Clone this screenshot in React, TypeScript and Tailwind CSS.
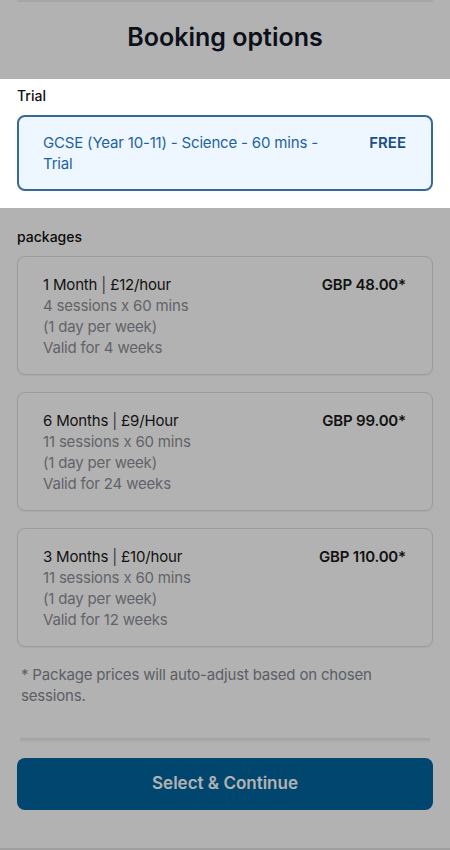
const PACKAGES = [
  { title: '1 Month', rate: '£12/hour', sessions: '4 sessions x 60 mins', days: '(1 day per week)', valid: 'Valid for 4 weeks', price: 'GBP 48.00*' },
  { title: '6 Months', rate: '£9/Hour', sessions: '11 sessions x 60 mins', days: '(1 day per week)', valid: 'Valid for 24 weeks', price: 'GBP 99.00*' },
  { title: '3 Months', rate: '£10/hour', sessions: '11 sessions x 60 mins', days: '(1 day per week)', valid: 'Valid for 12 weeks', price: 'GBP 110.00*' },
]

export default function App() {
  return (
    <div className="min-h-[850px] bg-white flex flex-col font-['Inter',sans-serif] text-[#111827]">
      <div className="mx-[17px] h-[2px] bg-[#efefef]" />
      <h1 className="mt-[19px] mb-[26px] text-center text-[25px] leading-8 font-semibold text-[#111827]">Booking options</h1>

      {/* spotlighted section */}
      <section className="relative z-10 bg-white px-[17px] pt-[7px] pb-[17px] shadow-[0_0_0_9999px_rgba(0,0,0,0.3)]">
        <div className="text-[14px] leading-5 font-medium text-[#111]">Trial</div>
        <div className="mt-[9px] flex items-start gap-6 rounded-lg border-2 border-[#36699a] bg-[#eef7ff] pl-[24px] pr-[25px] py-[15px]">
          <p className="flex-1 text-[15px] leading-[21px] tracking-[-0.18px] text-[#1f62a0]">GCSE (Year 10-11) - Science - 60 mins - Trial</p>
          <span className="text-[15px] leading-[21px] font-semibold text-[#1b4f86]">FREE</span>
        </div>
      </section>

      <div className="px-[17px] mt-[19px]">
        <div className="text-[14px] leading-5 font-medium text-[#111]">packages</div>
        <div className="mt-[9px] flex flex-col gap-[17px]">
          {PACKAGES.map((p) => (
            <div key={p.title} className="flex items-start justify-between rounded-lg border border-[#dedede] bg-white pl-[25px] pr-[26px] pt-[17px] pb-[16px] shadow-[0_1px_2px_rgba(0,0,0,0.06)] tracking-[-0.18px]">
              <div className="text-[15px] leading-[21px]">
                <div className="text-[#1a1a1a]">
                  {p.title} <span className="text-[#555]">|</span> {p.rate}
                </div>
                <div className="text-[#8d8f96]">{p.sessions}</div>
                <div className="text-[#8d8f96]">{p.days}</div>
                <div className="text-[#8d8f96]">{p.valid}</div>
              </div>
              <span className="text-[15px] leading-[21px] font-semibold text-[#1a1a1a]">{p.price}</span>
            </div>
          ))}
        </div>
      </div>

      <p className="px-[21px] mt-[17px] text-[15px] leading-[21px] tracking-[-0.18px] text-[#858891]">* Package prices will auto-adjust based on chosen sessions.</p>

      <div className="mt-[32px] flex-1 flex flex-col border-b-2 border-[#e4e4e4]">
        <div className="mx-[20px] h-[2px] bg-[#ececec] shadow-[0_1px_2px_rgba(0,0,0,0.08)]" />
        <div className="px-[17px] pt-[18px] pb-[36px]">
          <button className="w-full h-[52px] rounded-lg bg-[#0165a0] text-white text-[17px] font-semibold">Select &amp; Continue</button>
        </div>
      </div>
    </div>
  )
}
